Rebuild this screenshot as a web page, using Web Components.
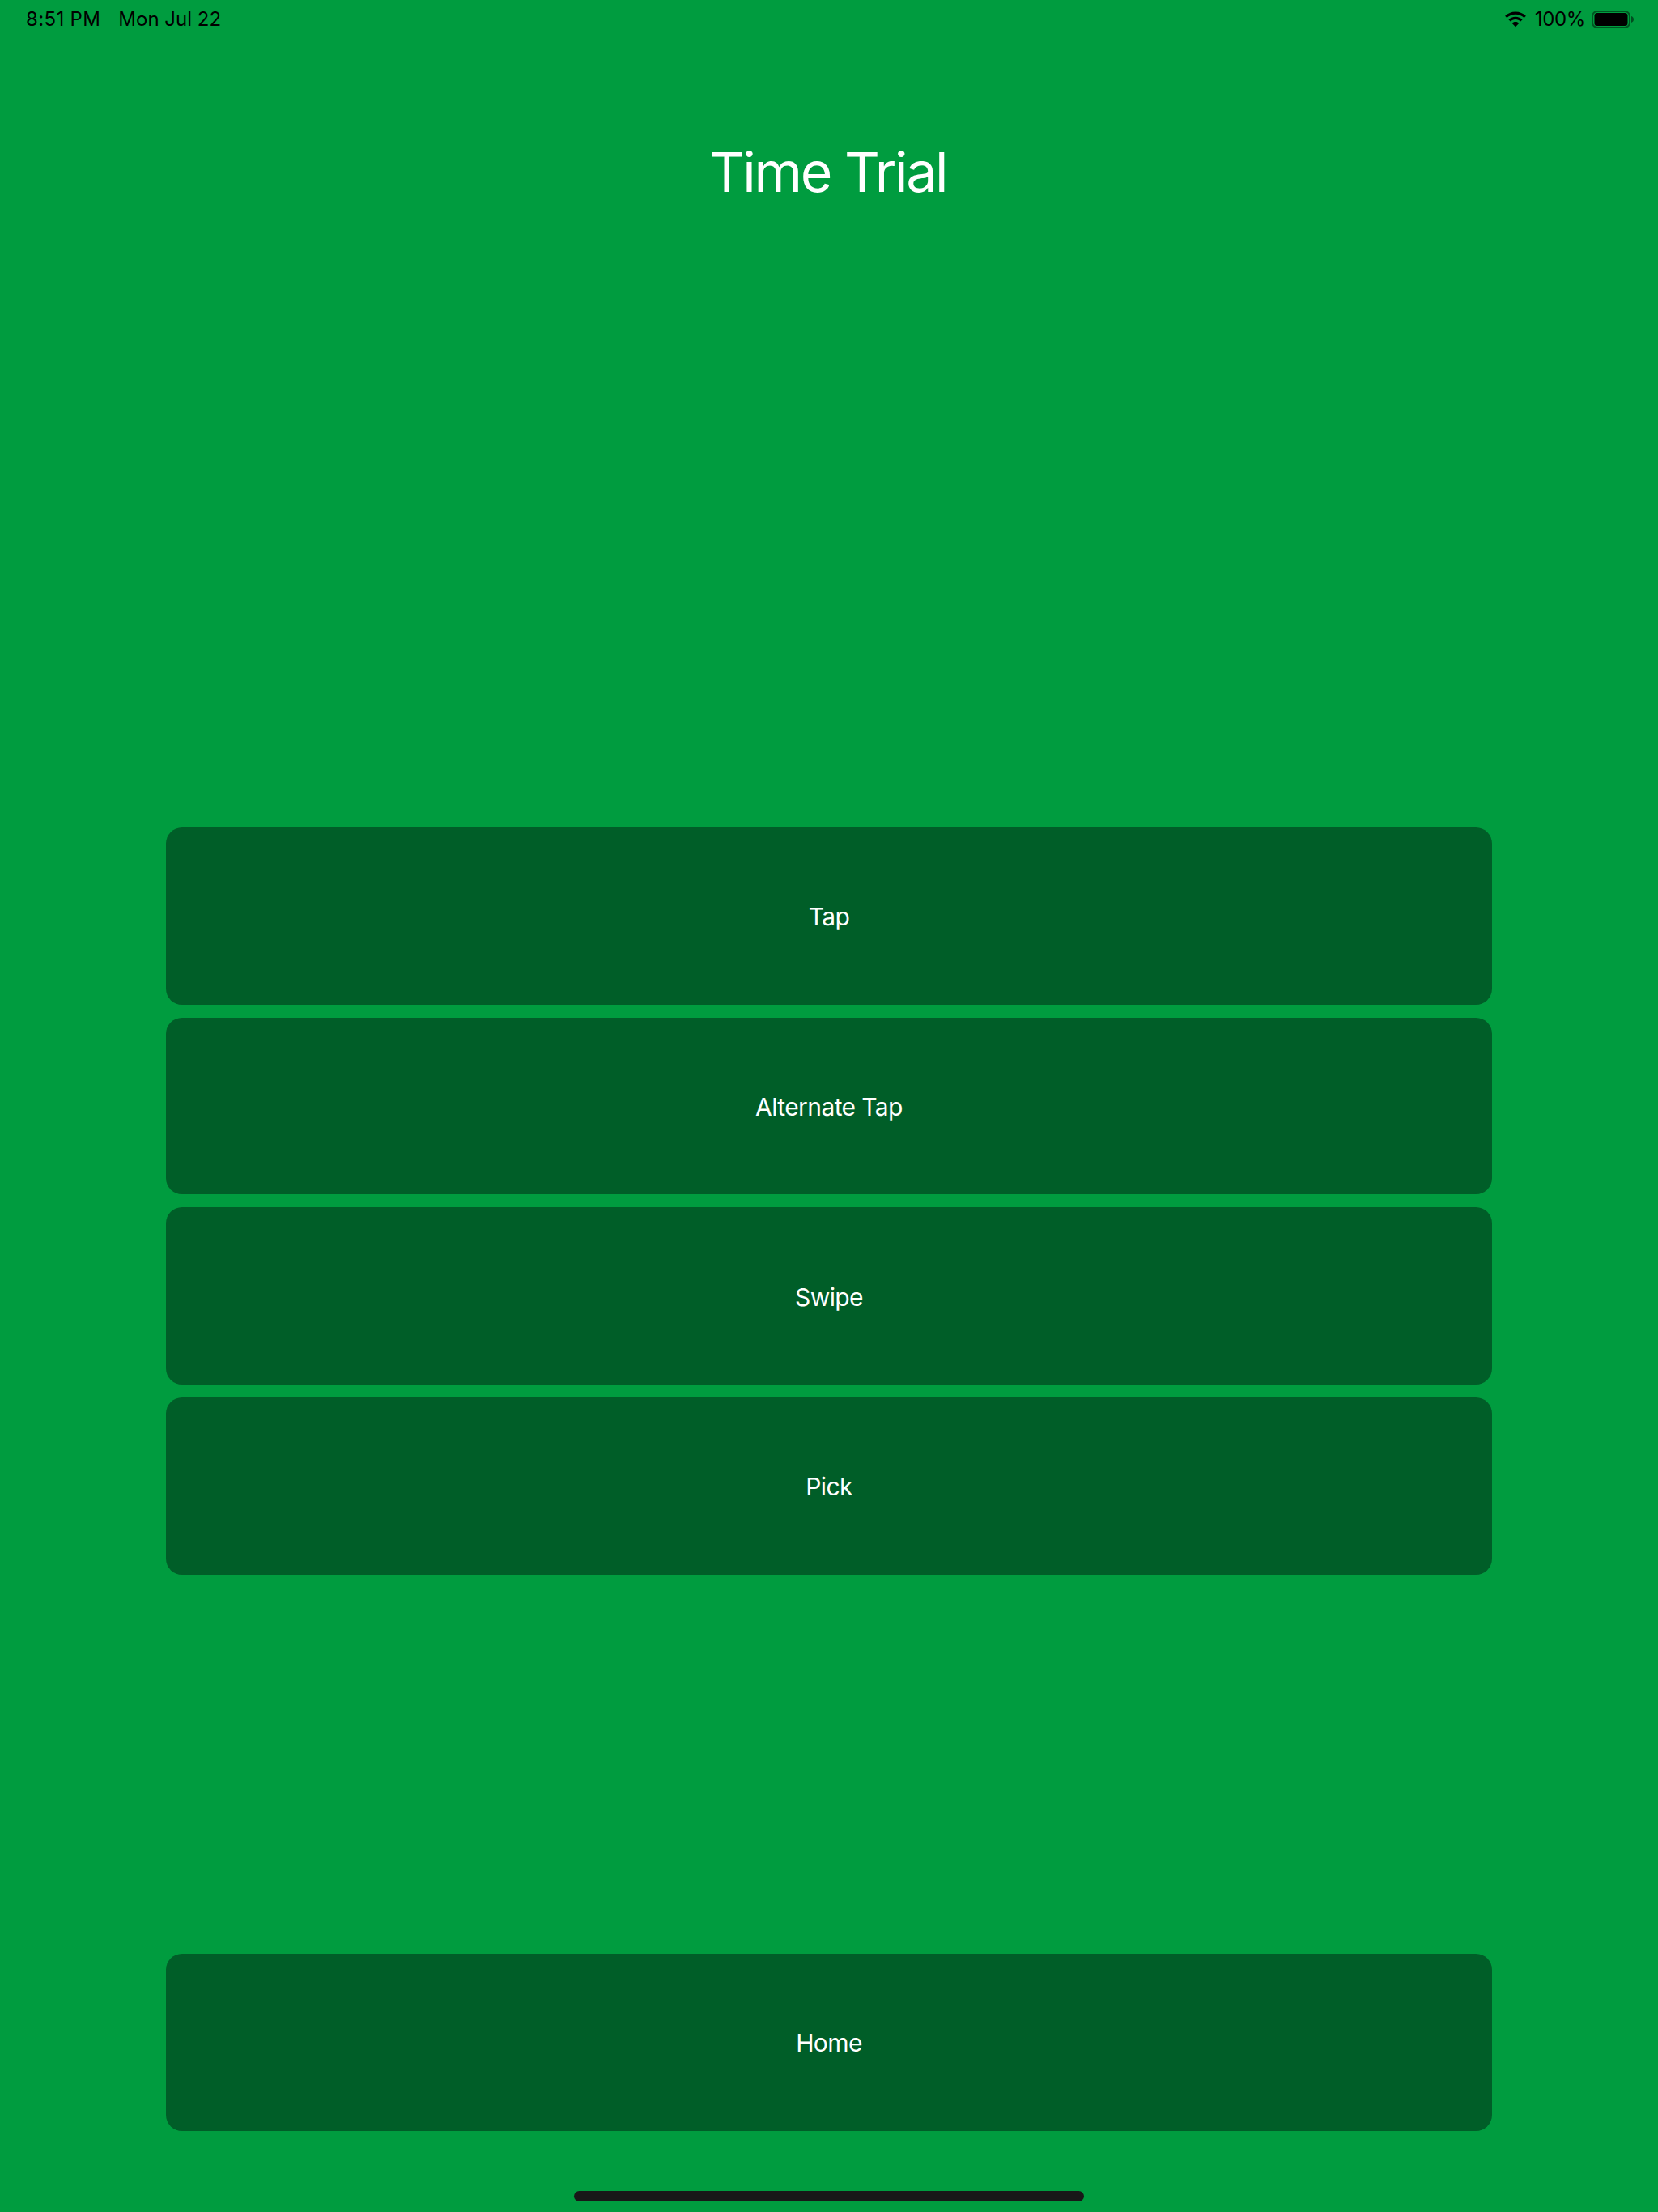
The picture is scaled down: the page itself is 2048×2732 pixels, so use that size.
<!DOCTYPE html>
<html lang="en"><head><meta charset="utf-8"><title>Time Trial</title>
<style>html,body{margin:0;padding:0;background:#009c3f}</style></head>
<body>
<trial-screen>
<status-bar slot="status"></status-bar>
<span slot="title">Time Trial</span>
<menu-button slot="menu">Tap</menu-button>
<menu-button slot="menu">Alternate Tap</menu-button>
<menu-button slot="menu">Swipe</menu-button>
<menu-button slot="menu">Pick</menu-button>
<menu-button slot="home">Home</menu-button>
</trial-screen>
<script>
class StatusBar extends HTMLElement{constructor(){super();this.attachShadow({mode:'open'}).innerHTML=`
<style>
:host{display:flex;align-items:center;justify-content:space-between;height:48px;padding:0 30px 0 32px;box-sizing:border-box;font:400 24px/48px Inter,"Liberation Sans",sans-serif;color:#000}
.l{display:flex;gap:22px}.l span:first-child{letter-spacing:.35px}
.r{display:flex;align-items:center}
.p{letter-spacing:-.35px;margin:0 8px 0 10px}
svg{display:block}
</style>
<div class="l"><span>8:51 PM</span><span>Mon Jul 22</span></div>
<div class="r">
<svg width="28" height="20" viewBox="0 0 30 22"><path fill="#000" d="M15 0.5C9.4 0.5 4.4 2.7.8 6.3l2.5 2.6C6.3 5.900 10.400 4.100 15 4.100s8.700 1.800 11.700 4.800l2.500-2.600C25.600 2.700 20.600.5 15 .5zM15 7.400c-3.700 0-7 1.500-9.400 3.800l2.500 2.600c1.800-1.700 4.200-2.800 6.900-2.800s5.100 1.100 6.900 2.800l2.500-2.600C22 8.900 18.700 7.400 15 7.400zM15 14.300c-1.900 0-3.600.7-4.800 1.900L15 21.200l4.800-5c-1.200-1.200-2.900-1.900-4.800-1.900z"/></svg>
<span class="p">100%</span>
<svg width="52" height="24" viewBox="0 0 52 24"><rect x="1" y="2" width="46" height="20" rx="6" fill="none" stroke="#000" stroke-opacity=".45" stroke-width="2"/><rect x="3.500" y="4" width="41" height="16" rx="3.500" fill="#000"/><path d="M49 8v8c1.800-.6 3-2.200 3-4s-1.200-3.400-3-4z" fill="#000" fill-opacity=".5"/></svg>
</div>`}}
customElements.define('status-bar',StatusBar);

class MenuButton extends HTMLElement{constructor(){super();this.attachShadow({mode:'open'}).innerHTML=`
<style>
:host{display:flex;align-items:center;justify-content:center;box-sizing:border-box;height:218.67px;padding-top:2px;background:#005e28;border-radius:20px;color:#fff;font:400 30px/1 Inter,"Liberation Sans",sans-serif;letter-spacing:-.6px}
</style><slot></slot>`}}
customElements.define('menu-button',MenuButton);

class TrialScreen extends HTMLElement{constructor(){super();this.attachShadow({mode:'open'}).innerHTML=`
<style>
:host{display:flex;flex-direction:column;width:2048px;height:2732px;background:#009c3f;overflow:hidden}
.title{display:flex;justify-content:center;height:974px;padding:114px 3px 0 0;box-sizing:border-box;color:#fff;font:400 68px/100px Inter,"Liberation Sans",sans-serif;letter-spacing:-2.3px}
.menu{display:flex;flex-direction:column;gap:16px;margin:0 205px}
.home{display:flex;flex-direction:column;margin:468.33px 205px 0}
.ind{width:630px;height:13px;border-radius:6.5px;background:#181818;margin:74.33px auto 0}
</style>
<slot name="status"></slot>
<div class="title"><slot name="title"></slot></div>
<div class="menu"><slot name="menu"></slot></div>
<div class="home"><slot name="home"></slot></div>
<div class="ind"></div>`}}
customElements.define('trial-screen',TrialScreen);
</script>
</body></html>
